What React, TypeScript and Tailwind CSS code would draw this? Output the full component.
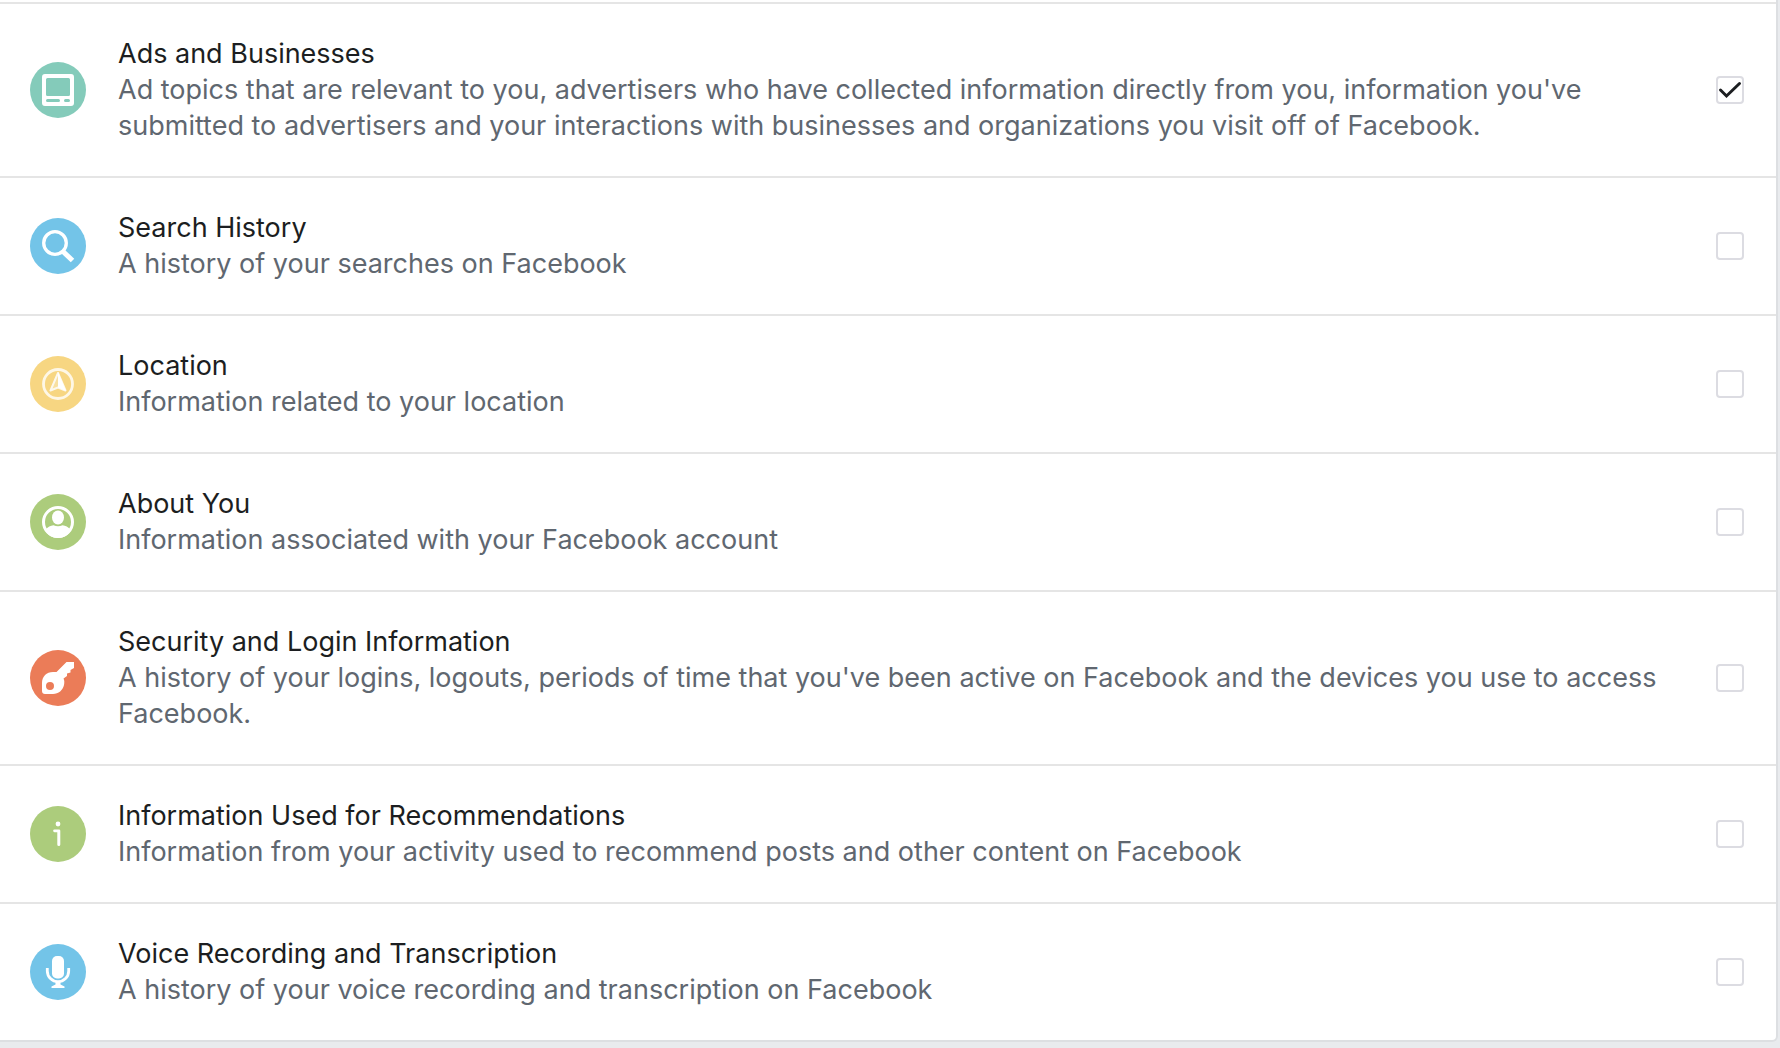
import React, { useId } from "react";

type IconName = "tablet" | "search" | "location" | "person" | "key" | "info" | "microphone";

type Category = {
  title: string;
  description: string;
  icon: IconName;
  color: string;
  checked?: boolean;
};

const categories: Category[] = [
  {
    title: "Ads and Businesses",
    description:
      "Ad topics that are relevant to you, advertisers who have collected information directly from you, information you've submitted to advertisers and your interactions with businesses and organizations you visit off of Facebook.",
    icon: "tablet",
    color: "bg-[#84cbba]",
    checked: true,
  },
  {
    title: "Search History",
    description: "A history of your searches on Facebook",
    icon: "search",
    color: "bg-[#73c4e8]",
  },
  {
    title: "Location",
    description: "Information related to your location",
    icon: "location",
    color: "bg-[#f7d682]",
  },
  {
    title: "About You",
    description: "Information associated with your Facebook account",
    icon: "person",
    color: "bg-[#accc7c]",
  },
  {
    title: "Security and Login Information",
    description:
      "A history of your logins, logouts, periods of time that you've been active on Facebook and the devices you use to access Facebook.",
    icon: "key",
    color: "bg-[#eb7c58]",
  },
  {
    title: "Information Used for Recommendations",
    description: "Information from your activity used to recommend posts and other content on Facebook",
    icon: "info",
    color: "bg-[#accc7c]",
  },
  {
    title: "Voice Recording and Transcription",
    description: "A history of your voice recording and transcription on Facebook",
    icon: "microphone",
    color: "bg-[#73c4e8]",
  },
];

const glyphs: Record<IconName, React.ReactNode> = {
  tablet: (
    <path
      fill="currentColor"
      fillRule="evenodd"
      d="M15 12h26a3 3 0 0 1 3 3v26a3 3 0 0 1-3 3H15a3 3 0 0 1-3-3V15a3 3 0 0 1 3-3ZM17.5 16a1.500 1.500 0 0 0-1.500 1.500v15a1.500 1.500 0 0 0 1.500 1.500h21a1.500 1.500 0 0 0 1.500-1.500v-15a1.500 1.500 0 0 0-1.500-1.500ZM17.500 37a1.500 1.500 0 0 0 0 3h11a1.500 1.500 0 0 0 0-3ZM35.500 37a1.500 1.500 0 0 0 0 3h3a1.500 1.500 0 0 0 0-3Z"
    />
  ),
  search: (
    <g fill="none" stroke="currentColor">
      <circle cx="25" cy="25" r="11.3" strokeWidth="3.3" />
      <path d="M33 33.5 42.500 42.500" strokeWidth="5" />
    </g>
  ),
  location: (
    <g>
      <circle cx="28" cy="28" r="14.5" fill="none" stroke="currentColor" strokeWidth="2.8" opacity="0.8" />
      <path d="M28 17 20.500 34.500 28 31.500 35.500 34.500Z" fill="currentColor" fillOpacity="0.3" stroke="currentColor" strokeWidth="2" strokeLinejoin="round" opacity="0.85" />
      <path d="M28 16v15.500l8 3.500Z" fill="currentColor" />
    </g>
  ),
  person: (
    <g fill="currentColor">
      <circle cx="28" cy="28" r="14.5" fill="none" stroke="currentColor" strokeWidth="3" />
      <ellipse cx="28" cy="23.5" rx="6" ry="7" />
      <path d="M15 36c3-3.500 5.500-4.200 8.500-4.800 3 1.500 6 1.500 9 0 3 .6 5.500 1.300 8.500 4.800-2.500 5-7 8-13 8s-10.500-3-13-8Z" />
    </g>
  ),
  key: (
    <path
      fill="currentColor"
      fillRule="evenodd"
      d="M36.500 12H44v6l-3.500 2v2.500l-3.500 1v2.500l-3.500 2.500c1 2 1 4 .5 6.500-1 5-5.500 9-11 9h-8c-1.800 0-3-1.200-3-3V33c0-6.500 4.500-11 11-11h3.500ZM20 32a4 4 0 1 0 0 8 4 4 0 0 0 0-8Z"
    />
  ),
  info: (
    <g fill="currentColor">
      <circle cx="28" cy="18" r="2.4" />
      <path d="M24.500 23.500h4.500a1.300 1.300 0 0 1 1.300 1.300V38.500a1.500 1.500 0 0 1-3 0V26.200h-2.800a1.300 1.300 0 0 1 0-2.700Z" />
    </g>
  ),
  microphone: (
    <g fill="currentColor">
      <rect x="22" y="12" width="12" height="22.5" rx="5" />
      <path d="M17.300 24v3a10.700 10.700 0 0 0 21.400 0v-3" fill="none" stroke="currentColor" strokeWidth="2.8" />
      <path d="M25.500 37.500h5v3l4 2V44h-13v-1.500l4-2Z" />
    </g>
  ),
};

function CategoryIcon({ name, color }: { name: IconName; color: string }) {
  return (
    <span className={`size-14 shrink-0 rounded-full text-white ${color}`}>
      <svg viewBox="0 0 56 56" className="size-14" aria-hidden="true">
        {glyphs[name]}
      </svg>
    </span>
  );
}

function CategoryRow({ category }: { category: Category }) {
  const id = useId();
  return (
    <li className="flex items-center gap-8 border-t-2 border-[#e5e5e5] py-8 pr-8 pl-[30px]">
      <CategoryIcon name={category.icon} color={category.color} />
      <label htmlFor={id} className="flex-1 text-[27px] leading-9">
        <span className="block text-[#1c1e21]">{category.title}</span>
        <span className="block text-[#606770]">{category.description}</span>
      </label>
      <span className="grid size-7 shrink-0">
        <input
          id={id}
          type="checkbox"
          defaultChecked={category.checked}
          className="peer col-start-1 row-start-1 size-7 appearance-none rounded border-2 border-[#dcdce2] bg-white"
        />
        <svg
          viewBox="0 0 28 28"
          aria-hidden="true"
          className="pointer-events-none invisible col-start-1 row-start-1 size-7 text-[#1c1e21] peer-checked:visible"
        >
          <path d="M4.500 14 10.500 20 23.500 7.500" fill="none" stroke="currentColor" strokeWidth="3" strokeLinecap="round" />
        </svg>
      </span>
    </li>
  );
}

export default function App() {
  return (
    <main className="min-h-screen bg-[#e9ebee] pr-0.5 font-['Inter',sans-serif]">
      <ul className="rounded-br-md border-r-2 border-b-2 border-[#dddfe2] bg-white pt-0.5">
        {categories.map((category) => (
          <CategoryRow key={category.title} category={category} />
        ))}
      </ul>
    </main>
  );
}
